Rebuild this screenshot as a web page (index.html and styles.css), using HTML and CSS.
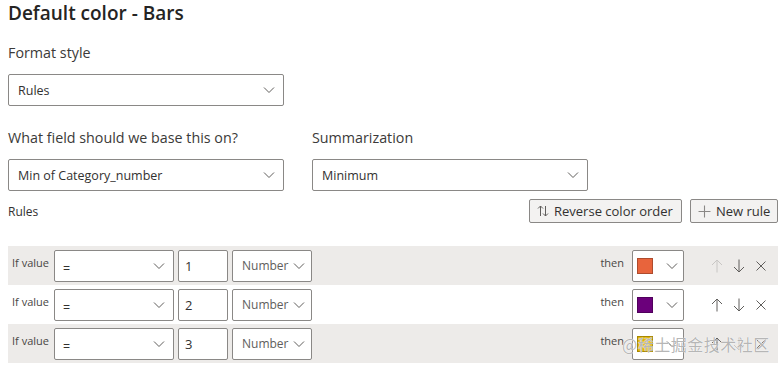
FILE: index.html
```html
<!DOCTYPE html>
<html>
<head>
    <title>Default color - Bars</title>
    <link rel="stylesheet" href="styles.css">
</head>
<body>
    <div class="panel">
        <h1 class="title">Default color - Bars</h1>

        <div class="field">
            <div class="label">Format style</div>
            <div class="select wide">
                <span>Rules</span>
                <svg class="chev" viewBox="0 0 12 8"><path d="M1 1.5 L6 6.5 L11 1.5"/></svg>
            </div>
        </div>

        <div class="two-col">
            <div class="field">
                <div class="label">What field should we base this on?</div>
                <div class="select wide">
                    <span>Min of Category_number</span>
                    <svg class="chev" viewBox="0 0 12 8"><path d="M1 1.5 L6 6.5 L11 1.5"/></svg>
                </div>
            </div>
            <div class="field">
                <div class="label">Summarization</div>
                <div class="select wide">
                    <span>Minimum</span>
                    <svg class="chev" viewBox="0 0 12 8"><path d="M1 1.5 L6 6.5 L11 1.5"/></svg>
                </div>
            </div>
        </div>

        <div class="rules-head">
            <span class="small">Rules</span>
            <div class="btns">
                <button class="btn">
                    <svg class="ico" viewBox="0 0 12 12"><path d="M3.5 11 V1 M1 3.5 L3.5 1 L6 3.5 M8.5 1 V11 M6 8.5 L8.5 11 L11 8.5"/></svg>
                    Reverse color order
                </button>
                <button class="btn">
                    <svg class="ico plus" viewBox="0 0 12 12"><path d="M6 0.5 V11.5 M0.5 6 H11.5"/></svg>
                    New rule
                </button>
            </div>
        </div>

        <div class="rules">
            <div class="rule shade">
                <span class="if">If value</span>
                <div class="select op"><span>=</span><svg class="chev" viewBox="0 0 12 8"><path d="M1 1.5 L6 6.5 L11 1.5"/></svg></div>
                <div class="input">1</div>
                <div class="select kind"><span>Number</span><svg class="chev" viewBox="0 0 12 8"><path d="M1 1.5 L6 6.5 L11 1.5"/></svg></div>
                <span class="then">then</span>
                <div class="color"><span class="swatch orange"></span><svg class="chev" viewBox="0 0 12 8"><path d="M1 1.5 L6 6.5 L11 1.5"/></svg></div>
                <div class="acts">
                    <svg class="act off" viewBox="0 0 12 14"><path d="M6 13.5 V1 M1 6 L6 1 L11 6"/></svg>
                    <svg class="act" viewBox="0 0 12 14"><path d="M6 0.5 V13 M1 8 L6 13 L11 8"/></svg>
                    <svg class="act" viewBox="0 0 12 12"><path d="M1.5 1.5 L10.5 10.5 M10.5 1.5 L1.5 10.5"/></svg>
                </div>
            </div>
            <div class="rule">
                <span class="if">If value</span>
                <div class="select op"><span>=</span><svg class="chev" viewBox="0 0 12 8"><path d="M1 1.5 L6 6.5 L11 1.5"/></svg></div>
                <div class="input">2</div>
                <div class="select kind"><span>Number</span><svg class="chev" viewBox="0 0 12 8"><path d="M1 1.5 L6 6.5 L11 1.5"/></svg></div>
                <span class="then">then</span>
                <div class="color"><span class="swatch purple"></span><svg class="chev" viewBox="0 0 12 8"><path d="M1 1.5 L6 6.5 L11 1.5"/></svg></div>
                <div class="acts">
                    <svg class="act" viewBox="0 0 12 14"><path d="M6 13.5 V1 M1 6 L6 1 L11 6"/></svg>
                    <svg class="act" viewBox="0 0 12 14"><path d="M6 0.5 V13 M1 8 L6 13 L11 8"/></svg>
                    <svg class="act" viewBox="0 0 12 12"><path d="M1.5 1.5 L10.5 10.5 M10.5 1.5 L1.5 10.5"/></svg>
                </div>
            </div>
            <div class="rule shade">
                <span class="if">If value</span>
                <div class="select op"><span>=</span><svg class="chev" viewBox="0 0 12 8"><path d="M1 1.5 L6 6.5 L11 1.5"/></svg></div>
                <div class="input">3</div>
                <div class="select kind"><span>Number</span><svg class="chev" viewBox="0 0 12 8"><path d="M1 1.5 L6 6.5 L11 1.5"/></svg></div>
                <span class="then">then</span>
                <div class="color"><span class="swatch yellow"></span><svg class="chev" viewBox="0 0 12 8"><path d="M1 1.5 L6 6.5 L11 1.5"/></svg></div>
                <div class="acts">
                    <svg class="act" viewBox="0 0 12 14"><path d="M6 13.5 V1 M1 6 L6 1 L11 6"/></svg>
                    <svg class="act off" viewBox="0 0 12 14"><path d="M6 0.5 V13 M1 8 L6 13 L11 8"/></svg>
                    <svg class="act" viewBox="0 0 12 12"><path d="M1.5 1.5 L10.5 10.5 M10.5 1.5 L1.5 10.5"/></svg>
                </div>
            </div>
        </div>
    </div>
    <div class="watermark">@稀土掘金技术社区</div>
</body>
</html>
```

FILE: styles.css
```css
body {
    margin: 0;
    padding: 0;
    font-family: "Open Sans", "Noto Sans", sans-serif;
    color: #323130;
    background: #fff;
}

.panel {
    padding: 1px 4px 0 8px;
}

.title {
    margin: 0;
    font-size: 19px;
    font-weight: 600;
    line-height: 24px;
    color: #252423;
}

.label {
    font-size: 14.3px;
    line-height: 20px;
    color: #3b3a39;
    margin-bottom: 11px;
}

.field {
    margin-top: 18px;
}

.two-col {
    display: flex;
    gap: 28px;
    margin-top: 4px;
}

.select {
    display: flex;
    align-items: center;
    justify-content: space-between;
    box-sizing: border-box;
    height: 32px;
    border: 1px solid #8a8886;
    border-radius: 2px;
    background: #fff;
    font-size: 12.5px;
    color: #323130;
    padding: 0 8px 0 9px;
}

.select.wide {
    width: 276px;
}

.chev {
    width: 12px;
    height: 8px;
    fill: none;
    stroke: #605e5c;
    stroke-width: 1;
}

.rules-head {
    display: flex;
    justify-content: space-between;
    align-items: center;
    margin-top: 8px;
    height: 24px;
}

.small {
    font-size: 12px;
    color: #323130;
}

.btns {
    display: flex;
    gap: 8px;
}

.btn {
    display: flex;
    align-items: center;
    gap: 5px;
    height: 24px;
    box-sizing: border-box;
    border: 1px solid #8a8886;
    border-radius: 2px;
    background: #f3f2f1;
    font-family: inherit;
    font-size: 13px;
    color: #323130;
    padding: 0 7px;
    white-space: nowrap;
}

.btn:first-child {
    width: 153px;
}

.btn:last-child {
    width: 88px;
}

.ico {
    width: 12px;
    height: 12px;
    flex-shrink: 0;
    fill: none;
    stroke: #605e5c;
    stroke-width: 1;
}

.ico.plus {
    width: 13px;
    height: 13px;
    stroke: #8a8886;
}

.rules {
    margin-top: 23px;
    width: 770px;
}

.rule {
    display: flex;
    align-items: center;
    height: 39px;
    padding-left: 4px;
    font-size: 12px;
}

.rule.shade {
    background: #edebe9;
}

.if {
    font-size: 11px;
    color: #484644;
    width: 42px;
    margin-top: -7px;
}

.select.op {
    width: 120px;
    padding-left: 8px;
}

.select.op span {
    padding-top: 5px;
}

.input {
    display: flex;
    align-items: center;
    box-sizing: border-box;
    width: 50px;
    height: 32px;
    margin-left: 4px;
    border: 1px solid #8a8886;
    border-radius: 2px;
    background: #fff;
    font-size: 13px;
    padding: 0 6px;
}

.select.kind {
    width: 80px;
    margin-left: 4px;
    padding: 0 6px 0 9px;
    font-size: 12px;
    color: #605e5c;
}

.then {
    margin-left: auto;
    font-size: 11px;
    color: #484644;
    margin-top: -7px;
    margin-right: 8px;
}

.color {
    display: flex;
    align-items: center;
    justify-content: space-between;
    box-sizing: border-box;
    width: 52px;
    height: 32px;
    border: 1px solid #8a8886;
    border-radius: 2px;
    background: #fff;
    padding: 0 5px 0 4px;
}

.swatch {
    width: 16px;
    height: 16px;
    box-sizing: border-box;
    border: 1px solid rgba(0, 0, 0, 0.25);
}

.orange { background: #e8643c; }
.purple { background: #6b007b; }
.yellow { background: #e0b400; }

.acts {
    display: flex;
    gap: 10px;
    margin-left: 27px;
    margin-right: 11px;
}

.act {
    width: 12px;
    height: 14px;
    fill: none;
    stroke: #605e5c;
    stroke-width: 1;
}

.act.off {
    stroke: #c8c6c4;
}

.watermark {
    position: absolute;
    z-index: 5;
    left: 622px;
    top: 332px;
    font-family: "Noto Sans CJK SC", sans-serif;
    font-size: 16px;
    color: rgba(150, 150, 150, 0.7);
    text-shadow: 0 0 1px #fff, 0 0 1px #fff;
    letter-spacing: 0.5px;
}
```
